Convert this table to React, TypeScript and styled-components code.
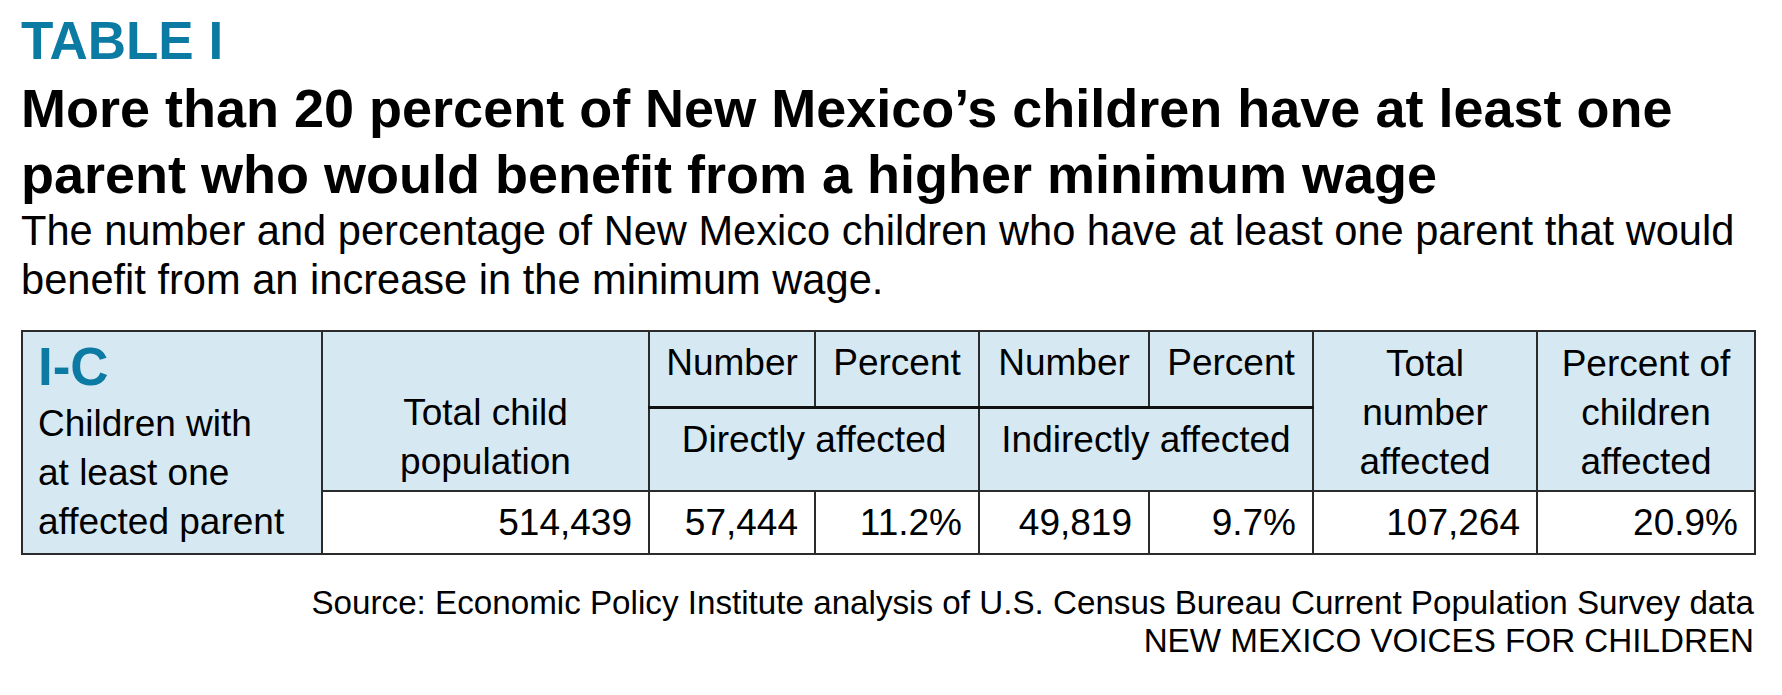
import { createGlobalStyle, styled } from "styled-components";

const GlobalStyle = createGlobalStyle`
  body {
    margin: 0;
    background: #fff;
    font-family: "Liberation Sans", Arial, sans-serif;
    color: #000;
  }
`;

const Page = styled.div`
  width: 1782px;
  box-sizing: border-box;
  padding: 11px 28px 0 21px;
`;

const Label = styled.div`
  font-size: 53px;
  font-weight: 700;
  line-height: 60px;
  color: #0b7ba3;
`;

const Headline = styled.h1`
  margin: 4px 0 0;
  font-size: 54px;
  font-weight: 700;
  line-height: 66px;
`;

const Subtitle = styled.p`
  margin: 0;
  font-size: 41.6px;
  line-height: 48.5px;
`;

const Table = styled.table`
  margin-top: 26px;
  width: 1733px;
  border-collapse: collapse;
  table-layout: fixed;
  font-size: 37px;
  line-height: 49px;
  border: 2px solid #2b2b2b;
`;

const Row = styled.tr<{ $h: number }>`
  height: ${(p) => p.$h}px;
`;

const Cell = styled.td<{ $align?: "top" | "middle" | "bottom" }>`
  background: #d6e9f3;
  border: 2px solid #2b2b2b;
  text-align: center;
  vertical-align: ${(p) => p.$align || "middle"};
  padding: 0 6px;
`;

const TopCell = styled(Cell)`
  padding-bottom: 12px;
`;

const GroupCell = styled(Cell)`
  padding-top: 6px;
  border-top-width: 3px;
  border-top-color: #111;
`;

const SpanCell = styled(Cell)`
  padding-bottom: 4px;
`;

const SideCell = styled.td`
  background: #d6e9f3;
  border: 2px solid #2b2b2b;
  vertical-align: top;
  padding: 5px 8px 0 15px;
`;

const SideCode = styled.div`
  font-size: 53px;
  font-weight: 700;
  line-height: 60px;
  color: #0b7ba3;
  margin-bottom: 2px;
`;

const ValueCell = styled.td`
  background: #fff;
  border: 2px solid #2b2b2b;
  text-align: right;
  vertical-align: middle;
  padding: 0 16px 0 6px;
`;

const Footer = styled.div`
  margin-top: 29px;
  width: 1733px;
  text-align: right;
  font-size: 33.2px;
  line-height: 38px;
`;

const widths = [300, 327, 166, 164, 170, 164, 224, 218];
const values = ["514,439", "57,444", "11.2%", "49,819", "9.7%", "107,264", "20.9%"];

export default function App() {
  return (
    <Page>
      <GlobalStyle />
      <Label>TABLE I</Label>
      <Headline>
        More than 20 percent of New Mexico’s children have at least one
        <br />
        parent who would benefit from a higher minimum wage
      </Headline>
      <Subtitle>
        The number and percentage of New Mexico children who have at least one parent that would
        <br />
        benefit from an increase in the minimum wage.
      </Subtitle>
      <Table>
        <colgroup>
          {widths.map((w, i) => (
            <col key={i} style={{ width: w }} />
          ))}
        </colgroup>
        <tbody>
          <Row $h={76}>
            <SideCell rowSpan={3}>
              <SideCode>I-C</SideCode>
              Children with
              <br />
              at least one
              <br />
              affected parent
            </SideCell>
            <SpanCell rowSpan={2} $align="bottom">
              Total child
              <br />
              population
            </SpanCell>
            <TopCell>Number</TopCell>
            <TopCell>Percent</TopCell>
            <TopCell>Number</TopCell>
            <TopCell>Percent</TopCell>
            <SpanCell rowSpan={2} $align="bottom">
              Total
              <br />
              number
              <br />
              affected
            </SpanCell>
            <SpanCell rowSpan={2} $align="bottom">
              Percent of
              <br />
              children
              <br />
              affected
            </SpanCell>
          </Row>
          <Row $h={84}>
            <GroupCell colSpan={2} $align="top">
              Directly affected
            </GroupCell>
            <GroupCell colSpan={2} $align="top">
              Indirectly affected
            </GroupCell>
          </Row>
          <Row $h={63}>
            {values.map((v) => (
              <ValueCell key={v}>{v}</ValueCell>
            ))}
          </Row>
        </tbody>
      </Table>
      <Footer>
        Source: Economic Policy Institute analysis of U.S. Census Bureau Current Population Survey data
        <br />
        NEW MEXICO VOICES FOR CHILDREN
      </Footer>
    </Page>
  );
}
